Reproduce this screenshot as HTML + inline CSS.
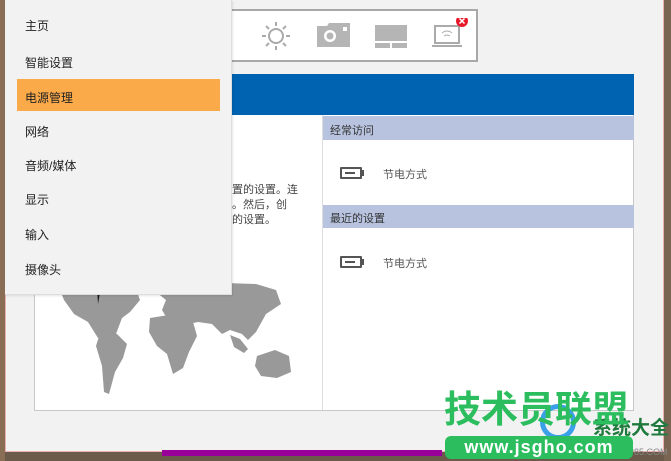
<!DOCTYPE html>
<html><head><meta charset="utf-8"><style>
*{margin:0;padding:0;box-sizing:border-box}
body{width:671px;height:461px;overflow:hidden;background:#6b5a4a;position:relative;font-family:"Liberation Sans","Noto Sans CJK SC",sans-serif;font-size:12px;color:#222}
.abs{position:absolute}
</style></head><body>
<div class="abs" style="left:0;top:0;width:5px;height:461px;background:#8a6d55"></div>
<div class="abs" style="left:664px;top:0;width:7px;height:461px;background:#7a6552"></div>
<div class="abs" style="left:5px;top:0;width:659px;height:452px;background:#f2f2f2;border-left:1px solid #e8b0b0;border-right:1px solid #e8b0b0;border-bottom:1px solid #e8b0b0"></div>
<div class="abs" style="left:162px;top:450px;width:280px;height:6px;background:#990099"></div>
<!-- toolbar -->
<div class="abs" style="left:226px;top:9px;width:252px;height:53px;background:#fff;border:2px solid #a8a8a8"></div>
<svg class="abs" style="left:258px;top:18px" width="210" height="36" viewBox="0 0 210 36">
<g stroke="#aaa" stroke-width="2" fill="none"><circle cx="18" cy="18" r="7"/><path d="M18 4v4M18 28v4M4 18h4M28 18h4M8 8l3 3M25 25l3 3M28 8l-3 3M8 28l3-3"/></g>
<path d="M59 8h10l2-3h21v24H59z" fill="#b5b5b5"/><circle cx="72" cy="18" r="6" fill="#fff"/><circle cx="72" cy="18" r="3.5" fill="#b5b5b5"/><rect x="85" y="9" width="4" height="4" fill="#fff"/>
<rect x="117" y="7" width="32" height="16" fill="#b5b5b5"/><rect x="117" y="25" width="15" height="5" fill="#b5b5b5"/><rect x="134" y="25" width="15" height="5" fill="#b5b5b5"/>
<rect x="177" y="8" width="24" height="17" fill="none" stroke="#aaa" stroke-width="2"/><path d="M174 28h30" stroke="#aaa" stroke-width="2"/><path d="M184 15q5-4 10 0M186 18q3-2 6 0" stroke="#aaa" fill="none"/>
<circle cx="204" cy="3" r="6" fill="#e8182c"/><path d="M201.5 0.5l5 5M206.5 0.5l-5 5" stroke="#fff" stroke-width="1.5"/>
</svg>
<!-- blue banner -->
<div class="abs" style="left:226px;top:74px;width:408px;height:41px;background:#0063b1"></div>
<!-- content -->
<div class="abs" style="left:34px;top:115px;width:600px;height:296px;background:#fff;border:1px solid #c8c8c8;border-top:none"></div>
<div class="abs" style="left:322px;top:115px;width:1px;height:295px;background:#ddd"></div>
<div class="abs" style="left:323px;top:116px;width:311px;height:24px;background:#b8c3df;font-size:11px;padding:6px 0 0 7px;color:#333">经常访问</div>
<div class="abs" style="left:323px;top:205px;width:311px;height:23px;background:#b8c3df;font-size:11px;padding:5px 0 0 7px;color:#333">最近的设置</div>
<div class="abs" style="left:340px;top:167px;width:22px;height:12px;border:2px solid #555;border-radius:1px"></div><div class="abs" style="left:362px;top:170px;width:2px;height:6px;background:#555"></div><div class="abs" style="left:345px;top:172px;width:10px;height:1.5px;background:#555"></div>
<div class="abs" style="left:383px;top:166px;font-size:11px;color:#555">节电方式</div>
<div class="abs" style="left:340px;top:256px;width:22px;height:12px;border:2px solid #555;border-radius:1px"></div><div class="abs" style="left:362px;top:259px;width:2px;height:6px;background:#555"></div><div class="abs" style="left:345px;top:261px;width:10px;height:1.5px;background:#555"></div>
<div class="abs" style="left:383px;top:255px;font-size:11px;color:#555">节电方式</div>
<div class="abs" style="left:232px;top:183px;font-size:11px;line-height:15px;color:#444;white-space:nowrap">置的设置。连<br>。然后，创<br>的设置。</div>
<!-- map -->
<svg class="abs" style="left:55px;top:280px" width="250" height="125" viewBox="0 0 250 125">
<g fill="#999">
<path d="M5 10l30-6 45 2 5 14-10 12-8 6-6 16-10 6-8-2-10-16-14-8-10-14z"/>
<path d="M46 50l16 4 10 10-4 14-8 14-6 22-5-2-2-26-6-20z"/>
<path d="M96 8l45-6 60 2 20 6 5 14-15 10-10 18-8 8-6-6-12-4-8 4-10-10-14-2-20 4-10-6-6-10 4-10z"/>
<path d="M95 38l25-4 18 8 4 14-8 16-6 16-10 6-6-20-10-8-8-14z"/>
<path d="M202 76l18-6 14 6 2 16-14 6-16-2-6-10z"/>
<path d="M175 55l10 4 8 10-4 4-10-6z"/>
</g>
<path d="M42 6l4 0-3 18z" fill="#111"/><path d="M42 6l4 0-2 6z" fill="#e33"/>
</svg>
<!-- menu -->
<div class="abs" style="left:5px;top:0;width:227px;height:295px;background:#f2f2f2;border-right:1px solid #ddd;border-bottom:1px solid #ddd;box-shadow:1px 1px 2px rgba(0,0,0,.1)"></div>
<div class="abs" style="left:17px;top:79px;width:203px;height:32px;background:#fbaa4a"></div>
<div class="abs" style="left:25px;top:19px;font-size:12px;line-height:14px;color:#222">主页</div>
<div class="abs" style="left:25px;top:54px;font-size:12px;color:#222">智能设置</div>
<div class="abs" style="left:25px;top:89px;font-size:12px;color:#222">电源管理</div>
<div class="abs" style="left:25px;top:123px;font-size:12px;color:#222">网络</div>
<div class="abs" style="left:25px;top:157px;font-size:12px;color:#222">音频/媒体</div>
<div class="abs" style="left:25px;top:191px;font-size:12px;color:#222">显示</div>
<div class="abs" style="left:25px;top:226px;font-size:12px;color:#222">输入</div>
<div class="abs" style="left:25px;top:261px;font-size:12px;color:#222">摄像头</div>
<!-- watermark -->
<div class="abs" style="left:540px;top:404px;width:36px;height:36px;border-radius:50%;border:5px solid #3aa0e8"></div>
<div class="abs" style="left:593px;top:413px;font-size:19px;font-weight:bold;color:#1e7a3c;white-space:nowrap">系统大全</div>
<div class="abs" style="left:628px;top:447px;font-size:9px;color:#888">P85.COM</div>
<div class="abs" style="left:444px;top:388px;font-size:37px;font-weight:bold;color:#2bbd5e;letter-spacing:0;white-space:nowrap;line-height:44px">技术员联盟</div>
<div class="abs" style="left:445px;top:436px;width:188px;height:23px;background:#2bbd5e;border-radius:6px;color:#fff;font-size:18px;font-weight:bold;text-align:center;line-height:22px;letter-spacing:1px">www.jsgho.com</div>
</body></html>
